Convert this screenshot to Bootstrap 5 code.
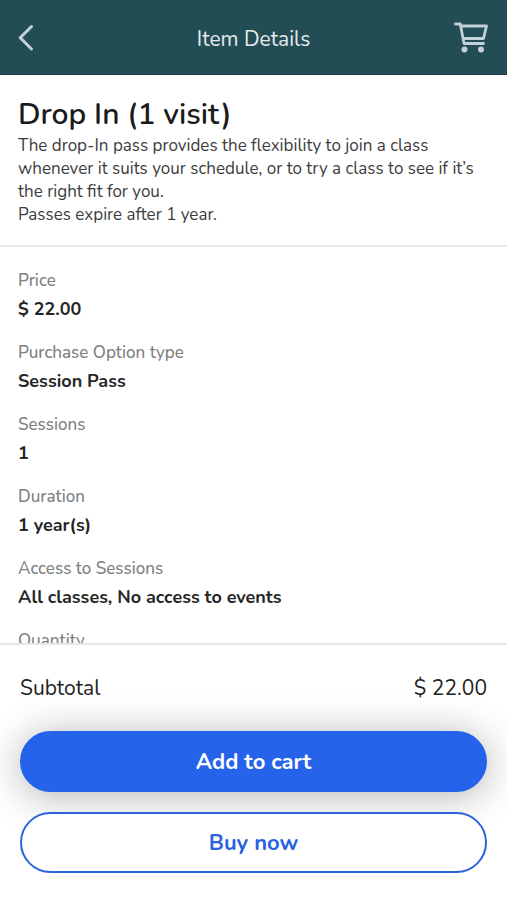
<!DOCTYPE html>
<html lang="en">
<head>
<meta charset="utf-8">
<meta name="viewport" content="width=device-width, initial-scale=1">
<title>Item Details</title>
<link href="https://cdn.jsdelivr.net/npm/bootstrap@5.3.0/dist/css/bootstrap.min.css" rel="stylesheet">
<style>
  body { font-family: Nunito, "Noto Sans", sans-serif; color: #222; background: #fff; }
  .app-bar { background: #234d54; padding: 15px 18px; border-bottom: 1px solid #1b4047; }
  .app-bar h1 { font-size: 21px; line-height: 28px; padding-top: 3px; font-weight: 400; color: #e3ebec; }
  .bar-btn { width: 44px; color: #c3d0d8; }
  .bar-btn:hover { color: #fff; }
  .scroll-area { min-height: 0; scrollbar-width: none; }
  .scroll-area::-webkit-scrollbar { display: none; }
  .intro { padding: 21px 18px 19px; border-bottom: 2px solid #e6e7e7; }
  .intro h2 { font-size: 30px; line-height: 38px; font-weight: 600; color: #1b1b1b; }
  .intro p { font-size: 17px; line-height: 23px; color: #3c3c3c; }
  .facts { padding: 20px 18px 24px; }
  .facts > div { padding-bottom: 16px; }
  .facts dt { font-size: 17px; line-height: 28px; font-weight: 500; color: #7d8183; }
  .facts dd { font-size: 18px; line-height: 28px; font-weight: 700; color: #262626; }
  .checkout { padding: 29px 20px 27px; border-top: 2px solid #e6e7e7; overflow: hidden; }
  .subtotal { font-size: 21px; line-height: 28px; padding-bottom: 29px; }
  .actions { gap: 20px; }
  .pill { font-size: 22px; line-height: 29px; font-weight: 700; padding: 15px 16px 13px; border: 2px solid #2563eb; }
  .pill-solid, .pill-solid:hover { background: #2563eb; color: #fff; border-color: #2563eb; box-shadow: 0 4px 40px rgba(0,0,0,.3); }
  .pill-line, .pill-line:hover { background: #fff; color: #2b63dd; border-color: #2b63dd; position: relative; }
</style>
<script src="https://cdn.jsdelivr.net/npm/bootstrap@5.3.0/dist/js/bootstrap.bundle.min.js" defer></script>
</head>
<body>
<div class="d-flex flex-column vh-100">
  <header class="app-bar flex-shrink-0 d-flex align-items-center justify-content-between">
    <button type="button" class="bar-btn btn border-0 p-0 d-flex" aria-label="Back">
      <svg width="32" height="44" viewBox="0 0 32 44" fill="none" stroke="currentColor" stroke-width="3" stroke-linecap="round" stroke-linejoin="round" aria-hidden="true"><path d="M13.500 11.500 2.200 22.800 13.500 34"/></svg>
    </button>
    <h1 class="m-0">Item Details</h1>
    <button type="button" class="bar-btn btn border-0 p-0 d-flex justify-content-end" aria-label="Cart">
      <svg width="36" height="44" viewBox="0 0 36 44" fill="none" stroke="currentColor" stroke-width="2.800" stroke-linecap="round" stroke-linejoin="round" aria-hidden="true"><path d="M2.500 9H7.300L11 28.500H30.500M7.800 11H33.500L30.500 23.500H10.200"/><circle cx="11.500" cy="34.500" r="3" fill="currentColor" stroke="none"/><circle cx="28" cy="34.500" r="3" fill="currentColor" stroke="none"/></svg>
    </button>
  </header>

  <main class="scroll-area flex-grow-1 overflow-auto">
    <section class="intro">
      <h2 class="m-0">Drop In (1 visit)</h2>
      <p class="m-0">The drop-In pass provides the flexibility to join a class whenever it suits your schedule, or to try a class to see if it’s the right fit for you.</p>
      <p class="m-0">Passes expire after 1 year.</p>
    </section>
    <dl class="facts m-0">
      <div><dt>Price</dt><dd class="m-0">$ 22.00</dd></div>
      <div><dt>Purchase Option type</dt><dd class="m-0">Session Pass</dd></div>
      <div><dt>Sessions</dt><dd class="m-0">1</dd></div>
      <div><dt>Duration</dt><dd class="m-0">1 year(s)</dd></div>
      <div><dt>Access to Sessions</dt><dd class="m-0">All classes, No access to events</dd></div>
      <div><dt>Quantity</dt></div>
    </dl>
  </main>

  <footer class="checkout flex-shrink-0">
    <div class="subtotal d-flex justify-content-between"><span>Subtotal</span><span>$ 22.00</span></div>
    <div class="actions d-grid">
      <button type="button" class="pill pill-solid btn rounded-pill">Add to cart</button>
      <button type="button" class="pill pill-line btn rounded-pill">Buy now</button>
    </div>
  </footer>
</div>
</body>
</html>
